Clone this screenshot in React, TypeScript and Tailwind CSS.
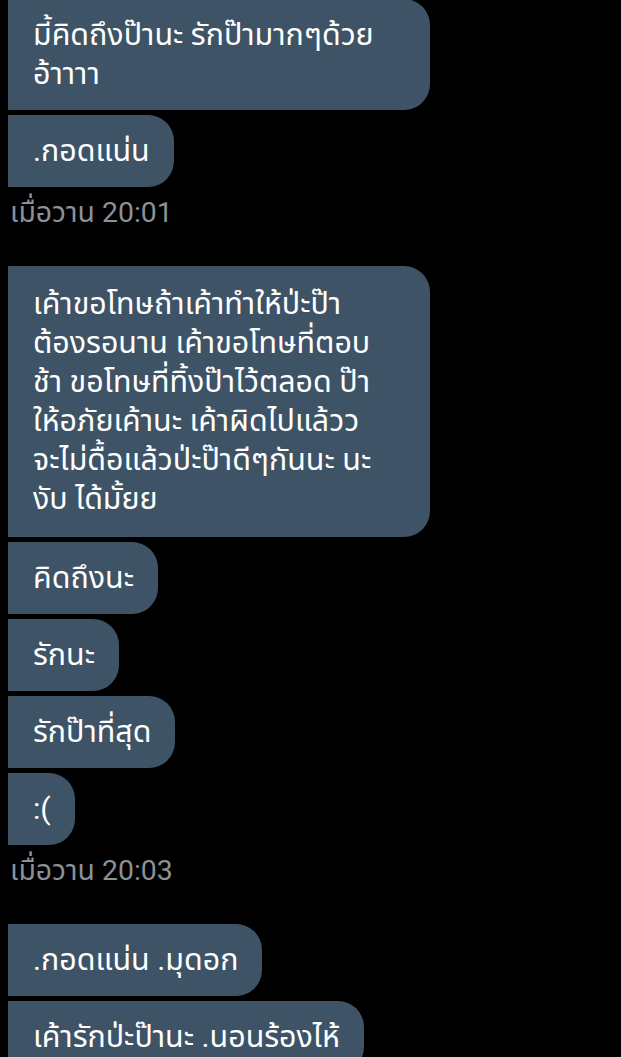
import React from "react";

const font = { fontFamily: 'Roboto, "Noto Sans", "Noto Sans Thai", "Liberation Sans", sans-serif' };

function Bubble({ lines, full }: { lines: string[]; full?: boolean }) {
  return (
    <div
      className={
        (full ? "w-[422px] " : "self-start ") +
        "bg-[#3e5366] rounded-r-[26px] pl-[25px] pr-[24px] pt-4 pb-[17px] text-white text-[30.4px] leading-[39px] whitespace-nowrap"
      }
    >
      {lines.map((l, i) => (
        <div key={i}>{l}</div>
      ))}
    </div>
  );
}

function Stamp({ t }: { t: string }) {
  return (
    <div className="pl-[2px] mt-[7px] mb-[34px] text-[#8b9197] text-[28.4px] leading-[38px]">{t}</div>
  );
}

export default function App() {
  return (
    <div className="w-[621px] h-[1057px] overflow-hidden bg-black" style={font}>
      <div className="flex flex-col gap-[5px] pl-2 -mt-[1px]">
        <Bubble full lines={["มี้คิดถึงป๊านะ รักป๊ามากๆด้วย", "อ้าาาา"]} />
        <Bubble lines={[".กอดแน่น"]} />
      </div>
      <div className="pl-2">
        <Stamp t="เมื่อวาน 20:01" />
      </div>
      <div className="flex flex-col gap-[5px] pl-2">
        <div className="w-[422px] bg-[#3e5366] rounded-r-[26px] pl-[25px] pr-[10px] pt-[18px] pb-[19px] text-white text-[30.4px] leading-[39px] whitespace-nowrap">
          <div>เค้าขอโทษถ้าเค้าทำให้ป่ะป๊า</div>
          <div>ต้องรอนาน เค้าขอโทษที่ตอบ</div>
          <div>ช้า ขอโทษที่ทิ้งป๊าไว้ตลอด ป๊า</div>
          <div>ให้อภัยเค้านะ เค้าผิดไปแล้วว</div>
          <div>จะไม่ดื้อแล้วป่ะป๊าดีๆกันนะ นะ</div>
          <div>งับ ได้มั้ยย</div>
        </div>
        <Bubble lines={["คิดถึงนะ"]} />
        <Bubble lines={["รักนะ"]} />
        <Bubble lines={["รักป๊าที่สุด"]} />
        <Bubble lines={[":("]} />
      </div>
      <div className="pl-2">
        <Stamp t="เมื่อวาน 20:03" />
      </div>
      <div className="flex flex-col gap-[5px] pl-2">
        <Bubble lines={[".กอดแน่น .มุดอก"]} />
        <Bubble lines={["เค้ารักป่ะป๊านะ .นอนร้องไห้"]} />
      </div>
    </div>
  );
}
